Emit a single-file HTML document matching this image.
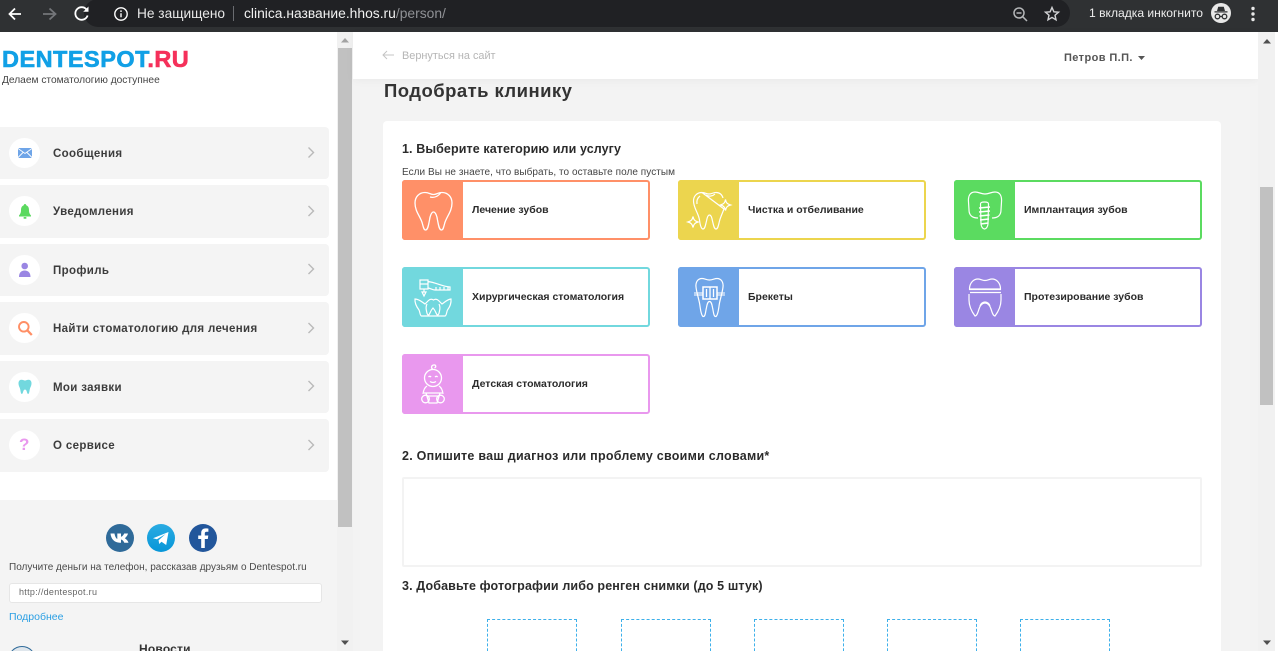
<!DOCTYPE html>
<html lang="ru"><head><meta charset="utf-8"><title>Подобрать клинику</title>
<style>
html,body{margin:0;padding:0;width:1278px;height:651px;overflow:hidden;background:#fff}
body{position:relative;font-family:"Liberation Sans","DejaVu Sans",sans-serif;color:#333}
.a{position:absolute;white-space:nowrap}
.card{position:absolute;left:0;width:329px;background:#f4f4f4;border-radius:0 4px 4px 0}
.circ{position:absolute;left:9px;width:31px;height:30px;border-radius:50%;background:#fff}
.ml{position:absolute;left:53px;font-size:11.5px;font-weight:bold;color:#3c3c3c;letter-spacing:.35px;line-height:14px;white-space:nowrap}
.tile{position:absolute;width:244px;height:56px;border:2px solid;border-radius:3px;background:#fff}
.tile i{position:absolute;left:-2px;top:-2px;width:61px;height:60px;display:block;border-radius:3px 0 0 3px}
.tile svg{position:absolute;left:-2px;top:-2px;width:61px;height:60px;fill:none;stroke:#fff;stroke-width:1.2}
.tile b{position:absolute;left:68px;top:21px;font-size:10.5px;line-height:14px;color:#2b2b2b;white-space:nowrap;letter-spacing:0}
.h{position:absolute;left:402px;font-size:12.5px;font-weight:bold;color:#2b2b2b;line-height:16px;white-space:nowrap}
.d{position:absolute;top:619px;width:88px;height:40px;border:1px dashed #3db0ea}
</style></head><body>

<!-- browser bar -->
<div class="a" style="left:0;top:0;width:1278px;height:32px;background:#2f3133"></div>
<div class="a" style="left:84px;top:-1px;width:986px;height:28px;background:#202124;border-radius:14px"></div>
<svg class="a" style="left:0;top:0" width="110" height="32" fill="none" stroke-width="1.8">
<path d="M21 14H10M15 8.500L9.500 14l5.500 5.500" stroke="#fff"/>
<path d="M43 14H55M49.500 8.500L55.500 14l-6 5.500" stroke="#74767a"/>
<path d="M86.500 9.500A6.300 6.300 0 1 0 87.600 15.500" stroke="#fff"/><path d="M88.500 6.500v5.300h-5.300z" fill="#fff"/>
</svg>
<svg class="a" style="left:113px;top:6px" width="16" height="16" fill="none" stroke="#fff" stroke-width="1.400"><circle cx="8" cy="8" r="6.200"/><path d="M8 7.200v4M8 4.400v1.600"/></svg>
<div class="a" style="left:137px;top:5px;font-size:13.700px;line-height:17px;color:#e8e8e8;">Не защищено</div>
<div class="a" style="left:233px;top:6px;width:1px;height:15px;background:#6a6c70"></div>
<div class="a" style="left:244px;top:5px;font-size:13.850px;line-height:17px;color:#f1f1f1;">clinica.название.hhos.ru<span style="color:#8f9195">/person/</span></div>
<svg class="a" style="left:1011px;top:4px" width="20" height="20" fill="none" stroke="#b4b6b8" stroke-width="1.500"><circle cx="8" cy="9" r="5"/><path d="M11.700 12.700L16 17M5.500 9h5"/></svg>
<svg class="a" style="left:1043px;top:5px" width="18" height="18" fill="none" stroke="#d2d3d5" stroke-width="1.400"><path d="M9 2.500l1.900 4.300 4.600.4-3.500 3 1 4.600L9 12.400l-4 2.400 1-4.600-3.500-3 4.600-.4z"/></svg>
<div class="a" style="left:1089px;top:5px;font-size:12.100px;line-height:17px;color:#eeeeee">1 вкладка инкогнито</div>
<svg class="a" style="left:1210px;top:2px" width="22" height="22"><circle cx="11" cy="11" r="10" fill="#e8e8e8"/><path d="M7 9l1.200-4.200h5.600L15 9zM4.500 9.300h13v1.200h-13z" fill="#2f3133"/><g fill="none" stroke="#2f3133" stroke-width="1.300"><circle cx="7.500" cy="14.500" r="2.300"/><circle cx="14.500" cy="14.500" r="2.300"/><path d="M9.800 14.500h2.400"/></g></svg>
<svg class="a" style="left:1250px;top:6px" width="6" height="16" fill="#e8e8e8"><circle cx="3" cy="2.500" r="1.700"/><circle cx="3" cy="8" r="1.700"/><circle cx="3" cy="13.500" r="1.700"/></svg>

<!-- left sidebar -->
<div class="a" style="left:2px;top:46px;font-size:23.500px;line-height:27px;font-weight:bold;letter-spacing:.48px;color:#11a0e6;-webkit-text-stroke:.6px #11a0e6">DENTESPOT<span style="color:#f5305a;-webkit-text-stroke:.6px #f5305a">.RU</span></div>
<div class="a" style="left:2px;top:74px;font-size:10.200px;line-height:13px;color:#444">Делаем стоматологию доступнее</div>

<div class="card" style="top:127px;height:52px"></div>
<div class="circ" style="top:138px"></div>
<svg class="a" style="left:18px;top:147px" width="15" height="12"><rect x="0" y="1" width="14" height="10" rx="1" fill="#6fa5e8"/><path d="M0 1.500l7 5 7-5M0 10.500l5-5M14 10.500l-5-5" stroke="#fff" stroke-width=".9" fill="none"/></svg>
<div class="ml" style="top:147px">Сообщения</div>
<div class="card" style="top:185px;height:53px"></div>
<div class="circ" style="top:196px"></div>
<svg class="a" style="left:18px;top:203px" width="14" height="17" fill="#5bd95f"><path d="M7 1c1 0 1.200.8 1.200 1.200C10.500 3 11 5 11 7.500c0 2.500 1 3.800 2 5v1H1v-1c1-1.200 2-2.500 2-5C3 5 3.500 3 5.800 2.200 5.800 1.800 6 1 7 1z"/><rect x="5.500" y="14" width="3" height="1.800" rx=".8"/></svg>
<div class="ml" style="top:205px">Уведомления</div>
<div class="card" style="top:244px;height:52px"></div>
<div class="circ" style="top:255px"></div>
<svg class="a" style="left:18px;top:262px" width="14" height="16" fill="#9a86e3"><circle cx="6.700" cy="4" r="3.300"/><path d="M1 15c0-4 2-6.500 5.700-6.500S12.500 11 12.500 15z"/></svg>
<div class="ml" style="top:264px">Профиль</div>
<div class="card" style="top:302px;height:53px"></div>
<div class="circ" style="top:313px"></div>
<svg class="a" style="left:17px;top:320px" width="16" height="16" fill="none" stroke="#ff8f66" stroke-width="1.900"><circle cx="6.800" cy="6.800" r="4.800"/><path d="M10.300 10.300L14.800 15" stroke-width="2.300"/></svg>
<div class="ml" style="top:322px">Найти стоматологию для лечения</div>
<div class="card" style="top:361px;height:52px"></div>
<div class="circ" style="top:372px"></div>
<svg class="a" style="left:18px;top:379px" width="14" height="16" fill="#72d8de"><path d="M3.500.8C5 .8 6 1.600 7 1.600S9 .8 10.500.8c2 0 3 1.500 3 3.500 0 2.700-1.300 4-1.800 6.500-.3 1.700-.6 4.200-1.600 4.200-1.300 0-1-4.500-3.100-4.500S5.200 15 3.900 15c-1 0-1.300-2.500-1.600-4.200C1.800 8.300.5 7 .5 4.300.5 2.300 1.500.8 3.500.8z"/></svg>
<div class="ml" style="top:381px">Мои заявки</div>
<div class="card" style="top:419px;height:53px"></div>
<div class="circ" style="top:430px"></div>
<div class="a" style="left:19px;top:435px;font-size:17px;line-height:20px;font-weight:bold;color:#e998ee">?</div>
<div class="ml" style="top:439px">О сервисе</div>

<svg class="a" style="left:307px;top:146px" width="9" height="312" fill="none" stroke="#b9b9b9" stroke-width="1.400">
<path d="M1.500 1.500l5 5-5 5M1.500 60l5 5-5 5M1.500 118l5 5-5 5M1.500 177l5 5-5 5M1.500 235l5 5-5 5M1.500 294l5 5-5 5"/></svg>

<div class="a" style="left:0;top:500px;width:337px;height:151px;background:#f4f4f4"></div>
<svg class="a" style="left:106px;top:524px" width="112" height="28">
<defs><linearGradient id="tg" x1="0" y1="0" x2="0" y2="1"><stop offset="0" stop-color="#2aabe2"/><stop offset="1" stop-color="#0796d8"/></linearGradient></defs>
<circle cx="14" cy="14" r="14" fill="#2f6a99"/>
<path d="M4.500 9.500h4c.5 3 1.700 5.200 2.800 5.500V9.500h3.700v3.300c1.300-.3 2.700-2 3.200-3.300H22c-.5 2.200-2.200 4-3.200 4.700 1.100.6 2.800 2 3.700 4.500h-4.200c-.7-1.700-2-3-3.300-3.200v3.200h-1.200C8.500 18.700 5 15 4.500 9.500z" fill="#fff"/>
<circle cx="55" cy="14" r="14" fill="url(#tg)"/>
<path d="M47 14.200l15.500-6.200-2.300 13-4.700-3.300-2.300 2.300-.6-3.800 7-6.200-8.700 5.300z" fill="#fff"/>
<circle cx="97" cy="14" r="14" fill="#22569b"/>
<path d="M98.800 24V15h3l.5-3.500h-3.500V9.400c0-1 .4-1.700 1.800-1.700h1.800V4.600c-.4 0-1.500-.2-2.700-.2-2.700 0-4.500 1.600-4.500 4.600v2.500h-3V15h3v9z" fill="#fff"/>
</svg>
<div class="a" style="left:9px;top:561px;font-size:10px;line-height:14px;color:#4a4a4a;letter-spacing:.01px">Получите деньги на телефон, рассказав друзьям о Dentespot.ru</div>
<div class="a" style="left:9px;top:583px;width:311px;height:18px;background:#fff;border:1px solid #e6e6e6;border-radius:3px"></div>
<div class="a" style="left:19px;top:586px;font-size:9px;line-height:12px;color:#666;letter-spacing:.3px">http://dentespot.ru</div>
<div class="a" style="left:9px;top:610px;font-size:10.500px;line-height:14px;color:#2b9fe3">Подробнее</div>
<div class="a" style="left:139px;top:641px;font-size:12px;line-height:16px;font-weight:bold;color:#333;letter-spacing:.2px">Новости</div>
<div class="a" style="left:8px;top:646px;width:26px;height:26px;border:1px solid #2f6a99;border-radius:50%;background:#dfe6ec"></div>

<!-- left scrollbar -->
<div class="a" style="left:337px;top:32px;width:16px;height:619px;background:#f1f1f1"></div>
<div class="a" style="left:338px;top:48px;width:14px;height:479px;background:#c1c1c1"></div>
<svg class="a" style="left:337px;top:32px" width="16" height="16"><path d="M8 6l4 4.500H4z" fill="#a3a3a3"/></svg>
<svg class="a" style="left:337px;top:635px" width="16" height="16"><path d="M8 10l4-4.500H4z" fill="#505050"/></svg>

<!-- main -->
<div class="a" style="left:353px;top:32px;width:905px;height:619px;background:#f3f3f3"></div>
<div class="a" style="left:353px;top:32px;width:905px;height:47px;background:#fff;box-shadow:0 2px 8px rgba(0,0,0,.04)"></div>
<svg class="a" style="left:382px;top:50px" width="12" height="10" fill="none" stroke="#c4c4c4" stroke-width="1"><path d="M12 5H1M5 1L1 5l4 4"/></svg>
<div class="a" style="left:402px;top:49px;font-size:10.900px;line-height:14px;color:#b5b5b5">Вернуться на сайт</div>
<div class="a" style="left:1064px;top:51px;font-size:11px;line-height:14px;font-weight:bold;color:#555;letter-spacing:.4px">Петров П.П.</div>
<svg class="a" style="left:1138px;top:56px" width="8" height="5"><path d="M0 0h7L3.500 4z" fill="#555"/></svg>

<div class="a" style="left:384px;top:80px;font-size:18.500px;line-height:22px;font-weight:bold;color:#333;letter-spacing:.45px">Подобрать клинику</div>
<div class="a" style="left:383px;top:121px;width:838px;height:540px;background:#fff;border-radius:4px"></div>

<div class="h" style="top:141px;letter-spacing:.1px">1. Выберите категорию или услугу</div>
<div class="a" style="left:402px;top:166px;font-size:10px;line-height:13px;color:#444;letter-spacing:.055px">Если Вы не знаете, что выбрать, то оставьте поле пустым</div>

<div class="tile" style="left:402px;top:180px;border-color:#ff9068"><i style="background:#ff9068"></i>
<svg viewBox="0 0 61 60" style="stroke-width:1.300"><path d="M23 12.500C27 12.500 28.500 14.500 31.500 14.500S36 12.500 40 12.500C46 12.500 50 17 50 23C50 32 44 37 42.500 44C41.500 48 41 50 39.500 50C37 50 36.500 45 35.500 40C35 36 33.500 32 31.500 32C29.500 32 28 36 27.500 40C26.500 45 26 50 23.500 50C22 50 21.500 48 20.500 44C19 37 13 32 13 23C13 17 17 12.500 23 12.500Z"/><path d="M28 17C32 18 36 16.500 38.500 13"/></svg>
<b>Лечение зубов</b></div>

<div class="tile" style="left:678px;top:180px;border-color:#ecd54e"><i style="background:#ecd54e"></i>
<svg viewBox="0 0 61 60"><path d="M24 12.500C27.500 12.500 28 14 31 14S35 12.500 38 12.500C41.500 12.500 44 14.500 45 18M46 29C44.500 33 42.500 37 41.500 41C40.500 45 40 49 38 49C36 49 35.500 45 34.500 41C34 38 33 35 31.500 35C30 35 29 38 28.500 41C27.500 45 27 49 25 49C23 49 22 44 21.500 40C20.500 33 15.500 28 15.500 21C15.500 16 19 12.500 24 12.500Z"/><path d="M28 15C31 17 35 16 37 14M19 24c-.5-3 .5-6 3-8"/><path d="M15 36.500c.6 3 1.600 4.500 5 5.500-3.400 1-4.400 2.500-5 5.500-.6-3-1.600-4.500-5-5.500 3.400-1 4.400-2.500 5-5.500zM47.500 19.500c.5 3 1.500 4.500 5 5.500-3.500 1-4.500 2.500-5 5.500-.5-3-1.500-4.500-5-5.500 3.500-1 4.500-2.500 5-5.500z"/></svg>
<b>Чистка и отбеливание</b></div>

<div class="tile" style="left:954px;top:180px;border-color:#5bdb60"><i style="background:#5bdb60"></i>
<svg viewBox="0 0 61 60"><path d="M24 38C18 38 15 35 15 30L14.500 22C14 16 16 12 21 12C25 12 27 14 31 14S37 12 41 12C46 12 48 16 47.500 22L47 30C47 35 44 38 38 38"/><path d="M26.500 24c0-1.500 1-2 4-2s4 .5 4 2l-.5 20c-.3 3-2 5-3.500 5s-3.200-2-3.500-5z"/><path d="M25 28l11-1M25 32l11-1M25.500 36l10-1M26 40l9-1M26.500 44l8-1" stroke-width="1.400"/></svg>
<b>Имплантация зубов</b></div>

<div class="tile" style="left:402px;top:267px;border-color:#72d8de"><i style="background:#72d8de"></i>
<svg viewBox="0 0 61 60"><path d="M18 13h8v9h-8zM18 17h8M26 14.500c8 1 14 5 22 5.500v3H33c-3 0-5-2-7-2M22 22v3M20 25h4l-2 4zM34 20v3M38 20v3M42 20v3M46 20v3"/><path d="M13 32c4 0 7 3 10 5l3.500-3.500c2-2 3.500-1.500 5-.5 1.500-1 3-1.500 5 .5L40 37c3-2 6-5 9-5 .5 5-2 9-3.500 11-1 2-1 6-2.500 6H19.500c-1.500 0-1.500-4-2.500-6-1.500-2-4.500-6-4-11zM25 37c-1.500 3-1 5-.5 7 .3 1.500.5 4 2 4 1.500-.5 1.500-4 4.500-7 3 3 3 6.500 4.500 7 1.500 0 1.700-2.500 2-4 .5-2 1-4-.5-7"/></svg>
<b>Хирургическая стоматология</b></div>

<div class="tile" style="left:678px;top:267px;border-color:#6fa5e8"><i style="background:#6fa5e8"></i>
<svg viewBox="0 0 61 60"><path d="M24 11.500c2.500 0 4.500 1.500 7.500 1.500s5-1.500 7.500-1.500c4.500 0 6.500 4 6 8.500-.5 5-2.500 11-3.500 16-.8 4-1.200 12-3.500 13.500-2.500.5-2.500-5-3.500-9-.5-2.500-1-6-3-6s-2.500 3.500-3 6c-1 4-1 9.500-3.500 9-2.300-1.500-2.700-9.500-3.500-13.500-1-5-3-11-3.500-16-.5-4.500 1.500-8.500 6-8.500z"/><rect x="16" y="25" width="31" height="4" fill="#fff" fill-opacity=".5" stroke="none"/><rect x="25" y="20" width="14" height="12" fill="#6fa5e8" stroke-width="1.500"/><path d="M32 20v12M28.500 22v8M35.500 22v8" stroke-width="1.300"/></svg>
<b>Брекеты</b></div>

<div class="tile" style="left:954px;top:267px;border-color:#9a86e3"><i style="background:#9a86e3"></i>
<svg viewBox="0 0 61 60"><path d="M15.500 22c0-6 4-10 8.500-10 2.500 0 4 1.500 7 1.500s4.500-1.500 7-1.500c4.500 0 8.500 4 8.500 10zM15 22.500h32M16 25.500h31"/><path d="M15 27v6c0 6 3 12 6 16 2 0 3-4 4-7 1-3 3-6 6-6s5 3 6 6c1 3 2 7 4 7 3-4 6-10 6-16v-6M26 39c.5-2 2.500-4 5-4s4.500 2 5 4"/></svg>
<b>Протезирование зубов</b></div>

<div class="tile" style="left:402px;top:354px;border-color:#e998ee"><i style="background:#e998ee"></i>
<svg viewBox="0 0 61 60" style="stroke-width:1.300"><circle cx="31" cy="24" r="8.500"/><path d="M31 15.500c-2-1-2-4 .5-4.500s3 2 1 3"/><path d="M26.500 23q1.300-1.300 2.600 0M33 23q1.300-1.300 2.600 0M28 27.500q3 2 6 0"/><path d="M25 32c-2.500 1.500-3.500 4-4 8M37 32c2.500 1.500 3.500 4 4 8"/><circle cx="23.500" cy="45" r="3.800"/><circle cx="38.500" cy="45" r="3.800"/><path d="M22 39h18M24 39l3 10h8l3-10M25 42h12"/></svg>
<b>Детская стоматология</b></div>

<div class="h" style="top:448px;letter-spacing:.26px">2. Опишите ваш диагноз или проблему своими словами*</div>
<div class="a" style="left:402px;top:477px;width:796px;height:86px;border:2px solid #f3f3f3;border-radius:2px;background:#fff"></div>
<div class="h" style="top:578px;letter-spacing:.13px">3. Добавьте фотографии либо ренген снимки (до 5 штук)</div>
<div class="d" style="left:487px"></div>
<div class="d" style="left:621px"></div>
<div class="d" style="left:754px"></div>
<div class="d" style="left:887px"></div>
<div class="d" style="left:1020px"></div>

<!-- right scrollbar -->
<div class="a" style="left:1258px;top:32px;width:17px;height:619px;background:#f1f1f1"></div>
<div class="a" style="left:1260px;top:187px;width:13px;height:218px;background:#c1c1c1"></div>
<svg class="a" style="left:1259px;top:34px" width="16" height="16"><path d="M8 5l4 4.500H4z" fill="#505050"/></svg>
<svg class="a" style="left:1259px;top:635px" width="16" height="16"><path d="M8 10l4-4.500H4z" fill="#505050"/></svg>
</body></html>
